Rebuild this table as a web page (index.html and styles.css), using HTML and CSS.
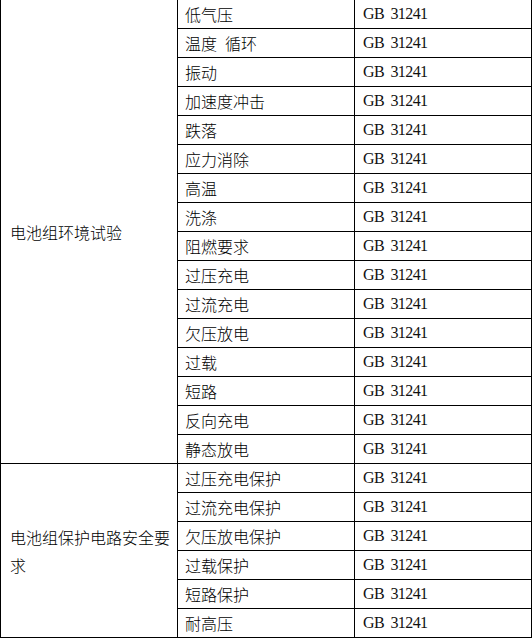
FILE: index.html
```html
<!DOCTYPE html>
<html lang="zh-CN">
<head>
<meta charset="utf-8">
<title>电池组试验</title>
<link rel="stylesheet" href="styles.css">
</head>
<body>
<table class="spec">
  <colgroup>
    <col class="c1"><col class="c2"><col class="c3">
  </colgroup>
  <tbody>
    <tr><td class="group" rowspan="16">电池组环境试验</td><td class="item">低气压</td><td class="std">GB 31241</td></tr>
    <tr><td class="item">温度 循环</td><td class="std">GB 31241</td></tr>
    <tr><td class="item">振动</td><td class="std">GB 31241</td></tr>
    <tr><td class="item">加速度冲击</td><td class="std">GB 31241</td></tr>
    <tr><td class="item">跌落</td><td class="std">GB 31241</td></tr>
    <tr><td class="item">应力消除</td><td class="std">GB 31241</td></tr>
    <tr><td class="item">高温</td><td class="std">GB 31241</td></tr>
    <tr><td class="item">洗涤</td><td class="std">GB 31241</td></tr>
    <tr><td class="item">阻燃要求</td><td class="std">GB 31241</td></tr>
    <tr><td class="item">过压充电</td><td class="std">GB 31241</td></tr>
    <tr><td class="item">过流充电</td><td class="std">GB 31241</td></tr>
    <tr><td class="item">欠压放电</td><td class="std">GB 31241</td></tr>
    <tr><td class="item">过载</td><td class="std">GB 31241</td></tr>
    <tr><td class="item">短路</td><td class="std">GB 31241</td></tr>
    <tr><td class="item">反向充电</td><td class="std">GB 31241</td></tr>
    <tr><td class="item">静态放电</td><td class="std">GB 31241</td></tr>
    <tr><td class="group" rowspan="6">电池组保护电路安全要求</td><td class="item">过压充电保护</td><td class="std">GB 31241</td></tr>
    <tr><td class="item">过流充电保护</td><td class="std">GB 31241</td></tr>
    <tr><td class="item">欠压放电保护</td><td class="std">GB 31241</td></tr>
    <tr><td class="item">过载保护</td><td class="std">GB 31241</td></tr>
    <tr><td class="item">短路保护</td><td class="std">GB 31241</td></tr>
    <tr><td class="item">耐高压</td><td class="std">GB 31241</td></tr>
  </tbody>
</table>
</body>
</html>
```

FILE: styles.css
```css
html, body {
  margin: 0;
  padding: 0;
  background: #ffffff;
}

body {
  font-family: "Noto Sans CJK SC", sans-serif;
  font-size: 16px;
  font-weight: 300;
  color: #000000;
}

.spec {
  border-collapse: collapse;
  table-layout: fixed;
  width: 532px;
  margin-top: -1px;
}

.c1, .c2, .c3 {
  width: 177px;
}

.spec td {
  border: 1px solid #000000;
  height: 28px;
  padding: 0;
  vertical-align: middle;
  line-height: 28px;
  white-space: nowrap;
}

.group {
  padding: 0 7px 0 9px !important;
  white-space: normal !important;
  word-break: break-all;
}

.item {
  padding: 0 0 0 7px !important;
  word-spacing: 4.4px;
}

.std {
  padding: 0 0 0 8px !important;
  font-family: "Liberation Serif", serif;
  font-weight: 400;
  letter-spacing: -0.6px;
  word-spacing: 3px;
  color: #111111;
}
```
